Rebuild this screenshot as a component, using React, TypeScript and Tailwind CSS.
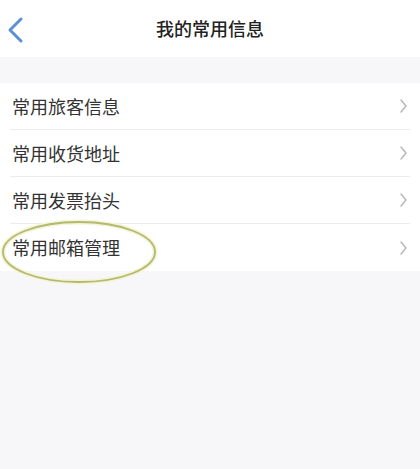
const ITEMS = ["常用旅客信息", "常用收货地址", "常用发票抬头", "常用邮箱管理"];

export default function App() {
  return (
    <div
      className="relative w-[420px] h-[469px] overflow-hidden bg-[#f7f7fa]"
      style={{ fontFamily: '"Noto Sans CJK SC", "Noto Sans", sans-serif' }}
    >
      <header className="relative flex items-center justify-center h-[57px] bg-white">
        <svg className="absolute left-[6px] top-[16px]" width="20" height="28" viewBox="0 0 20 28">
          <polyline points="15,3 4,14 15,25" fill="none" stroke="#5b8fd6" strokeWidth="3" strokeLinecap="round" strokeLinejoin="round" />
        </svg>
        <h1 className="text-[18px] text-[#222] m-0 font-medium">我的常用信息</h1>
      </header>

      <div className="mt-[26px] bg-white">
        {ITEMS.map((label, i) => (
          <div key={label} className="flex items-center h-[47px] pl-[10px] pr-[10px]">
            <div
              className={`flex flex-1 items-center h-full ${i < ITEMS.length - 1 ? "border-b border-[#ececec]" : ""}`}
            >
              <span className="flex-1 pl-[2px] text-[18px] text-[#333]">{label}</span>
              <svg width="10" height="16" viewBox="0 0 10 16" className="mr-[2px]">
                <polyline points="3,2 8,8 3,14" fill="none" stroke="#b8b8b8" strokeWidth="1.5" strokeLinecap="round" strokeLinejoin="round" />
              </svg>
            </div>
          </div>
        ))}
      </div>

      <svg className="absolute left-0 top-[218px]" width="160" height="68" viewBox="0 0 160 68">
        <ellipse cx="79" cy="34" rx="76" ry="30" fill="none" stroke="#f3f5d6" strokeWidth="5" />
        <ellipse cx="79" cy="34" rx="76" ry="30" fill="none" stroke="#b4b870" strokeWidth="1.8" />
      </svg>
    </div>
  );
}
